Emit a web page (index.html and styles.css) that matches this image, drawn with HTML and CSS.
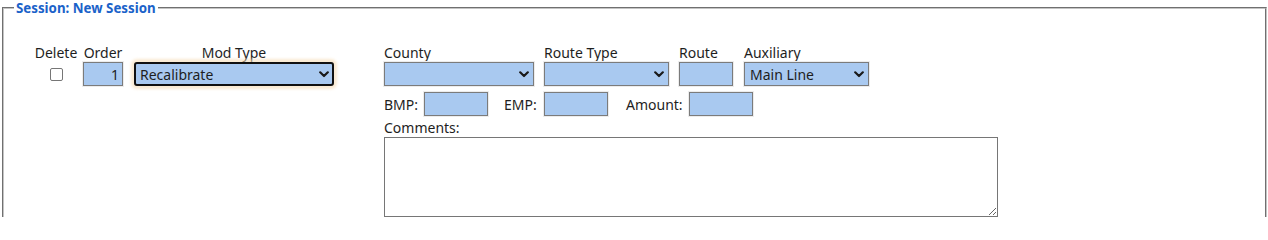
FILE: index.html
```html
<!DOCTYPE html>
<html lang="en">
<head>
<meta charset="utf-8">
<title>Session: New Session</title>
<link rel="stylesheet" href="styles.css">
</head>
<body>
<fieldset class="session">
  <legend class="session-title">Session: New Session</legend>
  <div class="mod-row">
    <div class="col col-delete">
      <label class="lbl lbl-center" for="del">Delete</label>
      <div class="ctl-line center"><input id="del" class="check" type="checkbox"></div>
    </div>
    <div class="col col-order">
      <label class="lbl lbl-center" for="ord">Order</label>
      <div class="ctl-line"><input id="ord" class="field field-order" type="text" value="1"></div>
    </div>
    <div class="col col-mod">
      <label class="lbl lbl-center" for="mod">Mod Type</label>
      <div class="ctl-line">
        <div class="sel-wrap sel-mod">
          <select id="mod" class="sel sel-focus"><option>Recalibrate</option></select>
          <svg class="chev" width="10" height="7" viewBox="0 0 10 7"><path d="M1.2 1.3 L5 5 L8.8 1.3" fill="none" stroke="#1a1a1a" stroke-width="2.2" stroke-linecap="round" stroke-linejoin="round"/></svg>
        </div>
      </div>
    </div>
    <div class="right">
      <div class="row1">
        <div class="col">
          <label class="lbl" for="county">County</label>
          <div class="sel-wrap sel-county">
            <select id="county" class="sel"><option></option></select>
            <svg class="chev" width="10" height="7" viewBox="0 0 10 7"><path d="M1.2 1.3 L5 5 L8.8 1.3" fill="none" stroke="#1a1a1a" stroke-width="2.2" stroke-linecap="round" stroke-linejoin="round"/></svg>
          </div>
        </div>
        <div class="col">
          <label class="lbl" for="rtype">Route Type</label>
          <div class="sel-wrap sel-rtype">
            <select id="rtype" class="sel"><option></option></select>
            <svg class="chev" width="10" height="7" viewBox="0 0 10 7"><path d="M1.2 1.3 L5 5 L8.8 1.3" fill="none" stroke="#1a1a1a" stroke-width="2.2" stroke-linecap="round" stroke-linejoin="round"/></svg>
          </div>
        </div>
        <div class="col">
          <label class="lbl" for="route">Route</label>
          <input id="route" class="field field-route" type="text">
        </div>
        <div class="col">
          <label class="lbl" for="aux">Auxiliary</label>
          <div class="sel-wrap sel-aux">
            <select id="aux" class="sel"><option>Main Line</option></select>
            <svg class="chev" width="10" height="7" viewBox="0 0 10 7"><path d="M1.2 1.3 L5 5 L8.8 1.3" fill="none" stroke="#1a1a1a" stroke-width="2.2" stroke-linecap="round" stroke-linejoin="round"/></svg>
          </div>
        </div>
      </div>
      <div class="row2">
        <label class="lbl2 lbl-bmp" for="bmp">BMP:</label>
        <input id="bmp" class="field field-mp" type="text">
        <label class="lbl2 lbl-emp" for="emp">EMP:</label>
        <input id="emp" class="field field-mp" type="text">
        <label class="lbl2 lbl-amt" for="amt">Amount:</label>
        <input id="amt" class="field field-mp" type="text">
      </div>
      <label class="lbl lbl-comments" for="comments">Comments:</label>
      <textarea id="comments" class="comments"></textarea>
    </div>
  </div>
</fieldset>
</body>
</html>
```

FILE: styles.css
```css
html, body {
  margin: 0;
  padding: 0;
  background: #ffffff;
  height: 217px;
  overflow: hidden;
}

body {
  font-family: "Noto Sans", "Open Sans", sans-serif;
  font-size: 14px;
  color: #1e1e1e;
}

.session {
  margin: 0 1px 0 2px;
  padding: 0 10px 20px 10px;
  border: 2px groove #c4c4c4;
  min-width: 0;
}

.session-title {
  padding: 0 2px;
  font-size: 13.3px;
  font-weight: 700;
  line-height: 16px;
  color: #1a62c9;
}

.mod-row {
  display: flex;
  align-items: flex-start;
  margin-top: 28px;
  margin-left: 18px;
}

.col {
  display: flex;
  flex-direction: column;
}

.col-delete {
  width: 48px;
}

.col-order {
  width: 40px;
  margin-left: 3px;
}

.col-mod {
  width: 200px;
  margin-left: 11px;
}

.lbl {
  display: block;
  height: 17px;
  line-height: 17px;
  margin-bottom: 1px;
  white-space: nowrap;
}

.lbl-center {
  text-align: center;
}

.ctl-line {
  height: 24px;
  display: flex;
  align-items: center;
}

.ctl-line.center {
  justify-content: center;
}

.check {
  appearance: none;
  -webkit-appearance: none;
  margin: 0;
  width: 13px;
  height: 13px;
  border: 1px solid #767676;
  border-radius: 2px;
  background: #ffffff;
}

.field {
  box-sizing: border-box;
  height: 24px;
  margin: 0;
  padding: 0 4px;
  border: 1px solid #7b7b7b;
  background: #a9c9f0;
  font-family: inherit;
  font-size: 14px;
  color: #1e1e1e;
  box-shadow: 0 0 0 1px #ececec;
  outline: none;
}

.field-order {
  width: 40px;
  text-align: right;
  padding-right: 3px;
}

.field-route {
  width: 54px;
}

.field-mp {
  width: 64px;
}

.sel-wrap {
  position: relative;
  height: 24px;
}

.sel {
  appearance: none;
  -webkit-appearance: none;
  box-sizing: border-box;
  width: 100%;
  height: 24px;
  margin: 0;
  padding: 0 20px 0 5px;
  border: 1px solid #7b7b7b;
  border-radius: 0;
  background: #a9c9f0;
  font-family: inherit;
  font-size: 14px;
  color: #1e1e1e;
  box-shadow: 0 0 0 1px #ececec;
  outline: none;
}

.sel-focus {
  border: 2px solid #111111;
  border-radius: 3px;
  padding-left: 4px;
  box-shadow: 0 0 3px 3px rgba(246, 220, 180, 0.6);
}

.chev {
  position: absolute;
  right: 5px;
  top: 9px;
  pointer-events: none;
}

.sel-mod {
  width: 200px;
}

.right {
  margin-left: 50px;
  display: flex;
  flex-direction: column;
}

.row1 {
  display: flex;
  align-items: flex-start;
}

.row1 .col + .col {
  margin-left: 10px;
}

.row1 .col:last-child {
  margin-left: 11px;
}

.sel-county {
  width: 150px;
}

.sel-rtype {
  width: 125px;
}

.sel-aux {
  width: 125px;
}

.row2 {
  display: flex;
  align-items: center;
  margin-top: 6px;
  height: 24px;
}

.lbl2 {
  white-space: nowrap;
}

.lbl-bmp {
  width: 40px;
}

.lbl-emp {
  width: 40px;
  margin-left: 16px;
}

.lbl-amt {
  width: 63px;
  margin-left: 18px;
}

.lbl-comments {
  margin-top: 3px;
  margin-bottom: 1px;
}

.comments {
  box-sizing: border-box;
  width: 614px;
  height: 80px;
  margin: 0;
  border: 1px solid #767676;
  background: #ffffff;
  font-family: inherit;
  font-size: 14px;
  resize: both;
}
```
